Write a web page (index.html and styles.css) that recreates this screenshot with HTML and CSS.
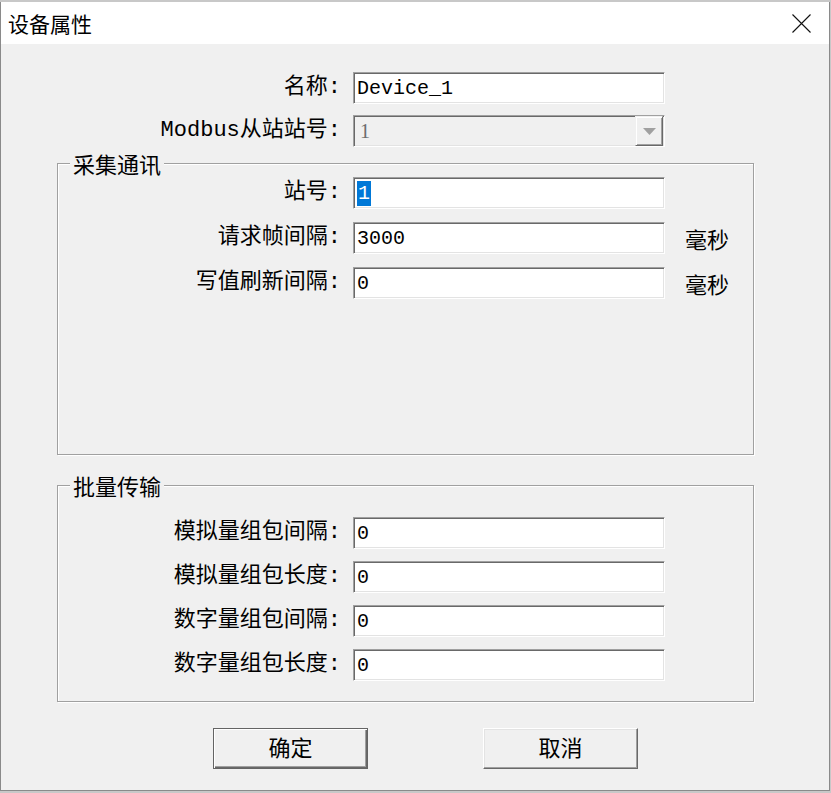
FILE: index.html
```html
<!DOCTYPE html>
<html lang="zh-CN">
<head>
  <meta charset="UTF-8">
  <title>设备属性</title>
  <link rel="stylesheet" href="styles.css">
</head>
<body>
  <div class="window">
    <div class="titlebar">
      <span class="title">设备属性</span>
      <svg class="close" width="19" height="19" viewBox="0 0 19 19">
        <path d="M0.5 0.5L18.5 18.5M18.5 0.5L0.5 18.5" stroke="#111" stroke-width="1.1" fill="none"/>
      </svg>
    </div>

    <div class="content">
      <div class="row">
        <span class="label">名称:</span>
        <div class="field">Device_1</div>
      </div>
      <div class="row">
        <span class="label">Modbus从站站号:</span>
        <div class="field disabled">
          <span class="value">1</span>
          <span class="drop">
            <svg width="13" height="7" viewBox="0 0 13 7"><polygon points="0,0 13,0 6.5,7" fill="#a0a0a0"/></svg>
          </span>
        </div>
      </div>

      <fieldset class="group group-comm">
        <legend>采集通讯</legend>
        <div class="row">
          <span class="label">站号:</span>
          <div class="field"><span class="selected">1</span></div>
        </div>
        <div class="row">
          <span class="label">请求帧间隔:</span>
          <div class="field">3000</div>
          <span class="unit">毫秒</span>
        </div>
        <div class="row">
          <span class="label">写值刷新间隔:</span>
          <div class="field">0</div>
          <span class="unit">毫秒</span>
        </div>
      </fieldset>

      <fieldset class="group group-batch">
        <legend>批量传输</legend>
        <div class="row">
          <span class="label">模拟量组包间隔:</span>
          <div class="field">0</div>
        </div>
        <div class="row">
          <span class="label">模拟量组包长度:</span>
          <div class="field">0</div>
        </div>
        <div class="row">
          <span class="label">数字量组包间隔:</span>
          <div class="field">0</div>
        </div>
        <div class="row">
          <span class="label">数字量组包长度:</span>
          <div class="field">0</div>
        </div>
      </fieldset>

      <div class="buttons">
        <button class="btn default">确定</button>
        <button class="btn">取消</button>
      </div>
    </div>
  </div>
</body>
</html>
```

FILE: styles.css
```css
body { margin: 0; background: #c8c8c8; font-family: "Noto Sans CJK SC", sans-serif; color: #000; }

.window { width: 830px; height: 789px; margin-top: 2px; box-sizing: border-box; border: 1px solid #8a8a8a; border-top: none; background: #f0f0f0; display: flex; flex-direction: column; }

.titlebar { height: 42px; flex: none; background: #fff; display: flex; align-items: center; justify-content: space-between; padding: 0 18px 0 7px; }
.title { font-size: 21px; line-height: 1; }
.close { display: block; }

.content { padding-top: 28px; display: flex; flex-direction: column; }

.row { display: flex; align-items: center; height: 32px; }
.row + .row { margin-top: 11px; }

/* ascii in mono, han falls through to the CJK face */
.label { width: 340px; margin-right: 12px; text-align: right; font-family: "Liberation Mono", "Noto Sans CJK SC", monospace; font-size: 22px; line-height: 22px; white-space: nowrap; }
.unit { margin-left: 20px; font-size: 22px; line-height: 22px; }

.field { width: 312px; height: 32px; box-sizing: border-box; background: #fff; border: 1px solid; border-color: #a0a0a0 #fff #fff #a0a0a0; box-shadow: inset 1px 1px 0 #696969, inset -1px -1px 0 #e3e3e3; padding: 0 3px; display: flex; align-items: center; font-family: "Liberation Mono", monospace; font-size: 20px; }
.field.disabled { background: #f0f0f0; color: #6d6d6d; padding-right: 1px; }
.field.disabled .value { flex: 1; font-family: "Liberation Serif", serif; padding-left: 3px; }
.drop { width: 28px; height: 30px; box-sizing: border-box; display: flex; align-items: center; justify-content: center; background: #f0f0f0; border: 1px solid; border-color: #f0f0f0 #696969 #696969 #f0f0f0; box-shadow: inset 1px 1px 0 #fff, inset -1px -1px 0 #a0a0a0; }
.drop svg { display: block; }
.selected { background: #0078d7; color: #fff; line-height: 25px; padding: 0 1px; }

.group { margin: 0 0 0 56px; width: 697px; box-sizing: border-box; border: 1px solid #a0a0a0; box-shadow: inset 1px 1px 0 #fff, 1px 1px 0 #fff; min-inline-size: 0; }
.group legend { margin-left: 12px; padding: 0 3px; font-size: 22px; line-height: 22px; background: #f0f0f0; }
.group .label { width: 283px; }

.group-comm { margin-top: 5px; padding: 3px 0 155px; }
.group-comm .row + .row { margin-top: 13px; }

.group-batch { margin-top: 19px; padding: 21px 0 20px; }
.group-batch .row + .row { margin-top: 12px; }

.buttons { display: flex; gap: 115px; padding-left: 212px; margin-top: 26px; }
.btn { width: 155px; height: 41px; background: #f0f0f0; font-family: "Noto Sans CJK SC", sans-serif; font-size: 22px; line-height: 22px; color: #000; border: 1px solid; border-color: #fff #696969 #696969 #fff; box-shadow: inset -1px -1px 0 #a0a0a0, inset 1px 1px 0 #e3e3e3; padding: 0 0 5px; cursor: pointer; }
.btn.default { border-color: #646464; box-shadow: inset 1px 1px 0 #fff, inset -1px -1px 0 #696969, inset -2px -2px 0 #a0a0a0; }
```
